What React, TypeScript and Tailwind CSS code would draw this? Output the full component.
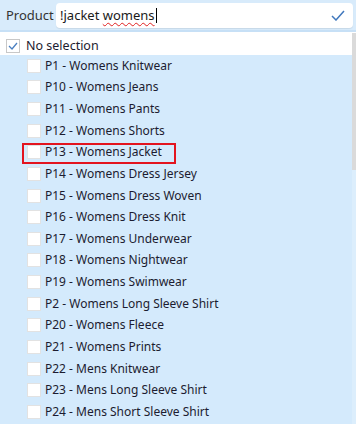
import React from "react";

const items = [
  "P1 - Womens Knitwear",
  "P10 - Womens Jeans",
  "P11 - Womens Pants",
  "P12 - Womens Shorts",
  "P13 - Womens Jacket",
  "P14 - Womens Dress Jersey",
  "P15 - Womens Dress Woven",
  "P16 - Womens Dress Knit",
  "P17 - Womens Underwear",
  "P18 - Womens Nightwear",
  "P19 - Womens Swimwear",
  "P2 - Womens Long Sleeve Shirt",
  "P20 - Womens Fleece",
  "P21 - Womens Prints",
  "P22 - Mens Knitwear",
  "P23 - Mens Long Sleeve Shirt",
  "P24 - Mens Short Sleeve Shirt",
];

export default function App() {
  return (
    <div
      className="w-[356px] h-[424px] overflow-hidden bg-white text-[12px] text-[#1c1c30]"
      style={{ fontFamily: '"Noto Sans", "Open Sans", sans-serif' }}
    >
      {/* header */}
      <div className="h-[32px] bg-[#d8ebfb] border-b-2 border-[#c7e0f6] flex items-start pt-[3px]">
        <div className="w-[56px] pl-[6px] h-[25px] flex items-center text-[13px] text-[#333]">Product</div>
        <div className="flex-1 mr-[3px] h-[25px] bg-white rounded-[4px] shadow-[0_1px_1px_rgba(0,0,0,0.08)] flex items-center pl-[4px] pr-[8px]">
          <span className="text-[13px] text-[#1a1a1a] leading-none">
            !jacket{" "}
            <span className="underline decoration-wavy decoration-[#e02020] decoration-1 underline-offset-2">womens</span>
          </span>
          <span className="w-px h-[15px] bg-black ml-px" />
          <div className="flex-1" />
          <svg width="14" height="11" viewBox="0 0 14 11" className="text-[#4078bd]">
            <polyline points="1,6 5,10 13,1" fill="none" stroke="currentColor" strokeWidth="1.5" />
          </svg>
        </div>
      </div>
      {/* list */}
      <div className="flex">
        <div className="flex-1">
          <div className="h-[23px] bg-white flex items-end pb-[2px] pl-[6px]">
            <div className="w-[14px] h-[14px] border border-[#c8c8c8] bg-white flex items-center justify-center">
              <svg width="10" height="8" viewBox="0 0 10 8">
                <polyline points="1,4 4,7 9,1" fill="none" stroke="#4a7fc0" strokeWidth="1.3" />
              </svg>
            </div>
            <span className="ml-[6px] leading-[14px] text-[12.5px]">No selection</span>
          </div>
          <div className="bg-[#d4eafc] pb-[20px]">
            {items.map((t) => (
              <div key={t} className="relative h-[21.625px] flex items-center pl-[27px]">
                <div className="w-[14px] h-[14px] bg-white border border-[#e2e2e2]" />
                <span className="ml-[4px] whitespace-nowrap">{t}</span>
                {t.startsWith("P13") && (
                  <div className="absolute left-[22px] top-[1px] w-[154px] h-[21px] border-2 border-[#e3141f]" />
                )}
              </div>
            ))}
          </div>
        </div>
        <div className="w-[4px] bg-[#dceefc] flex flex-col">
          <div className="h-[1px] bg-white" />
          <div className="h-[137px] bg-[#dadada]" />
        </div>
      </div>
    </div>
  );
}
